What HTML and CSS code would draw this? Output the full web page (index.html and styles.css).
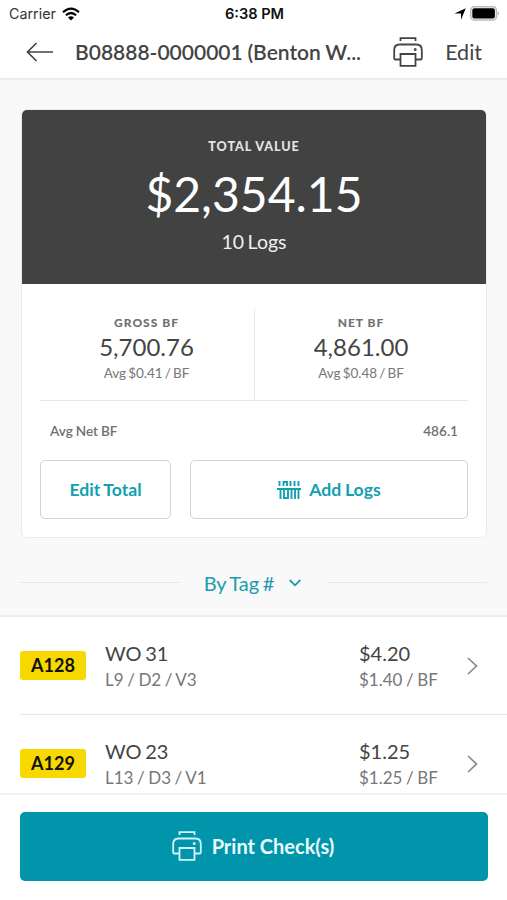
FILE: index.html
```html
<!DOCTYPE html>
<html lang="en">
<head>
    <meta charset="UTF-8">
    <meta name="viewport" content="width=device-width, initial-scale=1.0">
    <title>B08888-0000001</title>
    <link rel="stylesheet" href="styles.css">
</head>
<body>
    <!-- Printer icon, used in the header and the bottom button -->
    <svg class="sprite" width="0" height="0">
        <symbol id="printer" viewBox="0 0 30 30">
            <path d="M7.500 4V1.200h15V4M7.500 22.500h-5q-1.300 0-1.300-1.300V13q0-5.500 5.500-5.500h16.600q5.500 0 5.500 5.500v8.200q0 1.300-1.300 1.300h-5M7.500 17h15v11.800h-15z"/>
            <circle cx="22.200" cy="12.500" r="0.600"/>
        </symbol>
    </svg>

    <div class="status-bar">
        <div class="carrier">
            <span>Carrier</span>
            <svg width="18" height="14" viewBox="0 0 18 14">
                <path class="wifi-arc" d="M1 5.300q8-7.200 16 0M3.900 8.300q5.100-4.600 10.200 0"/>
                <path d="M6 10.400q3-2.500 6 0L9 13.600z"/>
            </svg>
        </div>
        <span class="time">6:38 PM</span>
        <div class="indicators">
            <svg width="12" height="12" viewBox="0 0 12 12"><path d="M11.800 0.200L7 11.800V5.600H0.400z"/></svg>
            <svg width="30" height="15" viewBox="0 0 30 15">
                <rect class="battery-shell" x="0.800" y="0.800" width="25.600" height="13.200" rx="3.500"/>
                <rect x="2.300" y="2.300" width="22.600" height="10.200" rx="2"/>
                <path class="battery-tip" d="M27.600 5q2.500 2.400 0 4.800z"/>
            </svg>
        </div>
    </div>

    <header class="header">
        <svg class="back" width="28" height="20" viewBox="0 0 28 20"><path d="M27 10H1.500M10.500 1L1.500 10l9 9"/></svg>
        <h1 class="title">B08888-0000001 (Benton W...</h1>
        <svg class="printer" width="30" height="30"><use href="#printer"/></svg>
        <span class="edit">Edit</span>
    </header>

    <main class="content">
        <section class="card">
            <div class="total">
                <div class="label">TOTAL VALUE</div>
                <div class="amount">$2,354.15</div>
                <div class="logs">10 Logs</div>
            </div>
            <div class="details">
                <div class="stats">
                    <div class="stat">
                        <div class="label">GROSS BF</div>
                        <div class="value">5,700.76</div>
                        <div class="avg">Avg $0.41 / BF</div>
                    </div>
                    <div class="stat">
                        <div class="label">NET BF</div>
                        <div class="value">4,861.00</div>
                        <div class="avg">Avg $0.48 / BF</div>
                    </div>
                </div>
                <div class="average">
                    <span>Avg Net BF</span>
                    <span>486.1</span>
                </div>
                <div class="actions">
                    <button class="button">Edit Total</button>
                    <button class="button">
                        <svg class="tally" width="24" height="20" viewBox="0 0 24 20">
                            <path d="M2.500 1v5M6.500 6V2h3.500V6M13.500 1v5M17.500 1v5M21.500 1v5M0 9h24M3.500 9v10M7 9v9h4V9M14.500 9v10M18 9v10M21.500 9v10"/>
                        </svg>
                        <span>Add Logs</span>
                    </button>
                </div>
            </div>
        </section>

        <div class="sort">
            <span class="sort-name">By Tag #</span>
            <svg width="12" height="8" viewBox="0 0 12 8"><path d="M0.700 1L6 6.300 11.300 1"/></svg>
        </div>

        <div class="list">
            <div class="row">
                <span class="tag">A128</span>
                <div class="log">
                    <div class="main">WO 31</div>
                    <div class="sub">L9 / D2 / V3</div>
                </div>
                <div class="price">
                    <div class="main">$4.20</div>
                    <div class="sub">$1.40 / BF</div>
                </div>
                <svg class="chevron" width="11" height="18" viewBox="0 0 11 18"><path d="M1 1l8.500 8L1 17"/></svg>
            </div>
            <div class="row">
                <span class="tag">A129</span>
                <div class="log">
                    <div class="main">WO 23</div>
                    <div class="sub">L13 / D3 / V1</div>
                </div>
                <div class="price">
                    <div class="main">$1.25</div>
                    <div class="sub">$1.25 / BF</div>
                </div>
                <svg class="chevron" width="11" height="18" viewBox="0 0 11 18"><path d="M1 1l8.500 8L1 17"/></svg>
            </div>
        </div>
    </main>

    <footer class="footer">
        <button class="print">
            <svg class="printer" width="30" height="30"><use href="#printer"/></svg>
            <span>Print Check(s)</span>
        </button>
    </footer>
</body>
</html>
```
FILE: styles.css
```css
* {
    box-sizing: border-box;
}

body {
    margin: 0;
    height: 900px;
    display: flex;
    flex-direction: column;
    overflow: hidden;
    background-color: #fff;
    color: #444;
    font-family: Lato, sans-serif;
}

svg {
    display: block;
    flex-shrink: 0;
}

button {
    font-family: inherit;
    padding: 0;
}

.sprite {
    position: absolute;
}

/* Phone status bar */
.status-bar {
    display: grid;
    grid-template-columns: 1fr auto 1fr;
    align-items: center;
    height: 27px;
    padding: 0 7px 0 9px;
    flex-shrink: 0;
    color: #111;
    font-family: Inter, sans-serif;
    font-size: 14.3px;
}

.carrier {
    display: flex;
    align-items: center;
    gap: 6px;
    color: #333;
}

.wifi-arc {
    fill: none;
    stroke: #000;
    stroke-width: 2.2;
}

.time {
    font-size: 14.6px;
    font-weight: 600;
}

.indicators {
    display: flex;
    justify-content: flex-end;
    align-items: center;
    gap: 4px;
}

.battery-shell {
    fill: #fff;
    stroke: #bbb;
    stroke-width: 1.5;
}

.battery-tip {
    fill: #aaa;
}

/* Page header */
.header {
    display: flex;
    align-items: center;
    height: 53px;
    padding: 0 25px 2px 26px;
    flex-shrink: 0;
    border-bottom: 2px solid #ececec;
}

.back {
    fill: none;
    stroke: #444;
    stroke-width: 1.7;
}

.title {
    flex: 1;
    margin: 0 0 0 21px;
    font-size: 21px;
    font-weight: 600;
    white-space: nowrap;
    word-spacing: -0.5px;
}

.printer {
    fill: none;
    stroke: #444;
    stroke-width: 1.8;
}

.edit {
    margin-left: 22px;
    font-size: 21.5px;
}

/* Scrolling part */
.content {
    flex: 1;
    min-height: 0;
    overflow: hidden;
    padding-top: 29px;
    background-color: #f9f9f9;
}

.card {
    height: 429px;
    margin: 0 20px 0 21px;
    border: 1px solid #ebebeb;
    border-radius: 6px;
    background-color: #fff;
    overflow: hidden;
}

.total {
    height: 174px;
    padding-top: 28px;
    background-color: #424242;
    color: #fff;
    text-align: center;
}

.label {
    font-size: 12px;
    line-height: 18px;
    font-weight: 900;
    letter-spacing: 1px;
}

.total .label {
    font-size: 12.6px;
    letter-spacing: 0.9px;
    color: #e4e4e4;
}

.amount {
    font-size: 48px;
    line-height: 76px;
}

.logs {
    font-size: 19.5px;
    line-height: 20px;
    word-spacing: -1.5px;
    color: #f0f0f0;
}

.details {
    padding: 25px 18px 0;
}

.stats {
    display: grid;
    grid-template-columns: 1fr 1fr;
    height: 92px;
    border-bottom: 1px solid #e6e6e6;
    text-align: center;
}

.stat {
    padding: 5px 1px 0 0;
}

.stat + .stat {
    border-left: 1px solid #e6e6e6;
}

.stat .label {
    color: #707070;
}

.value {
    font-size: 24px;
    line-height: 30px;
}

.avg {
    font-size: 13.5px;
    line-height: 22px;
    word-spacing: -1.4px;
    color: #777;
}

.average {
    display: flex;
    justify-content: space-between;
    align-items: center;
    height: 59px;
    padding: 1px 10px 0;
    font-size: 13.6px;
    font-weight: 600;
    word-spacing: -0.5px;
    color: #707070;
}

.actions {
    display: grid;
    grid-template-columns: 131px 1fr;
    gap: 19px;
}

.button {
    display: flex;
    justify-content: center;
    align-items: center;
    gap: 8px;
    height: 59px;
    border: 1px solid #d2d2d2;
    border-radius: 5px;
    background-color: #fff;
    color: #12a0b2;
    font-size: 17.6px;
    font-weight: 700;
    word-spacing: -0.7px;
}

.tally {
    fill: none;
    stroke: #12a0b2;
    stroke-width: 1.9;
}

/* Sort selector with a line on each side */
.sort {
    display: flex;
    align-items: center;
    height: 77px;
    padding: 12px 20px 0;
    color: #1a9cae;
    font-size: 20px;
    word-spacing: -1.5px;
}

.sort::before,
.sort::after {
    content: "";
    flex: 1;
    height: 1px;
    background-color: #e8e8e8;
}

.sort-name {
    margin: 0 15px 0 24px;
}

.sort svg {
    margin-right: 26px;
    fill: none;
    stroke: #1a9cae;
    stroke-width: 1.8;
}

/* Logs */
.list {
    border-top: 2px solid #ededed;
    background-color: #fff;
}

.row {
    display: flex;
    align-items: center;
    height: 98px;
    margin-left: 20px;
    padding-right: 29px;
    border-bottom: 1px solid #e8e8e8;
}

.tag {
    width: 66px;
    height: 29px;
    border-radius: 3px;
    background-color: #f7d900;
    color: #111;
    font-size: 18px;
    line-height: 29px;
    font-weight: 700;
    text-align: center;
}

.log {
    flex: 1;
    margin-left: 19px;
}

.price {
    width: 108px;
}

.main {
    padding-top: 1px;
    font-size: 20px;
    line-height: 26px;
    word-spacing: -1.5px;
}

.sub {
    font-size: 17px;
    line-height: 27px;
    word-spacing: -0.8px;
    color: #777;
}

.chevron {
    fill: none;
    stroke: #888;
    stroke-width: 1.7;
}

/* Bottom button */
.footer {
    height: 107px;
    padding: 17px 19px 0 20px;
    flex-shrink: 0;
    border-top: 2px solid #f3f3f3;
}

.print {
    display: flex;
    justify-content: center;
    align-items: center;
    gap: 10px;
    width: 100%;
    height: 69px;
    padding: 0 2px 1px 0;
    border: 0;
    border-radius: 5px;
    background-color: #0095ab;
    color: #e9fbfd;
    font-size: 20px;
    font-weight: 700;
}

.print .printer {
    stroke: #d5f6fa;
}
```
